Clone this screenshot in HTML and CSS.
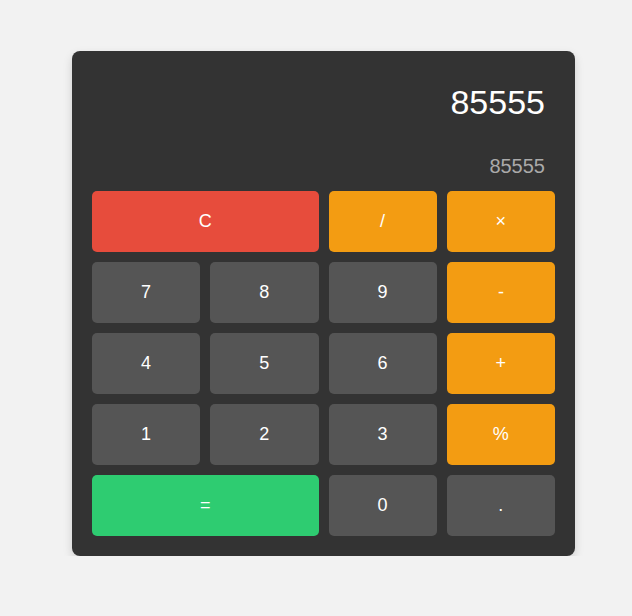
FILE: index.html
```html
<!DOCTYPE html>
<html>
<head>
<meta charset="utf-8">
<link rel="stylesheet" href="styles.css">
</head>
<body>
<div class="calc">
  <div class="display">
    <div class="result">85555</div>
    <div class="history">85555</div>
  </div>
  <div class="keys">
    <button class="key clear wide">C</button>
    <button class="key op">/</button>
    <button class="key op">×</button>
    <button class="key">7</button>
    <button class="key">8</button>
    <button class="key">9</button>
    <button class="key op">-</button>
    <button class="key">4</button>
    <button class="key">5</button>
    <button class="key">6</button>
    <button class="key op">+</button>
    <button class="key">1</button>
    <button class="key">2</button>
    <button class="key">3</button>
    <button class="key op">%</button>
    <button class="key equals wide">=</button>
    <button class="key">0</button>
    <button class="key">.</button>
  </div>
</div>
</body>
</html>
```
FILE: styles.css
```css
html, body {
  margin: 0;
  padding: 0;
  background: #f2f2f2;
  font-family: "Liberation Sans", Arial, sans-serif;
}
body {
  padding-top: 51px;
}
.calc {
  width: 463px;
  margin-left: 72px;
  padding: 20px;
  background: #333333;
  border-radius: 8px;
  box-shadow: 0 4px 10px rgba(0, 0, 0, 0.15);
}
.display {
  padding: 12px 10px 10px;
  margin-bottom: 10px;
  text-align: right;
}
.result {
  font-size: 34px;
  line-height: 39px;
  color: #ffffff;
  margin-bottom: 33px;
}
.history {
  font-size: 20px;
  line-height: 23px;
  color: #aaaaaa;
  margin-bottom: -7px;
}
.keys {
  display: grid;
  grid-template-columns: repeat(4, 1fr);
  gap: 10px;
}
.key {
  height: 61px;
  border: none;
  border-radius: 5px;
  background: #555555;
  color: #ffffff;
  font-family: "Liberation Sans", Arial, sans-serif;
  font-size: 18px;
  padding: 0;
}
.wide {
  grid-column: span 2;
}
.clear {
  background: #e74c3c;
}
.op {
  background: #f39c12;
}
.equals {
  background: #2ecc71;
}
```
